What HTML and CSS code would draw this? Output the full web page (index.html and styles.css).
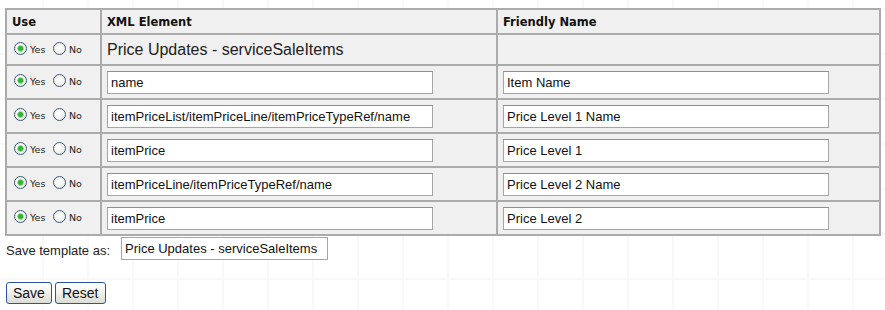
FILE: index.html
```html
<!DOCTYPE html>
<html lang="en">

<head>
    <meta charset="UTF-8">
    <meta name="viewport" content="width=device-width, initial-scale=1.0">
    <title>Template Mapping</title>
    <link rel="stylesheet" href="styles.css">
</head>

<body>
    <div class="page">
        <form class="mapping-form">
            <table class="mapping">
                <colgroup>
                    <col class="col-use">
                    <col class="col-xml">
                    <col class="col-name">
                </colgroup>
                <tr class="head">
                    <th>Use</th>
                    <th>XML Element</th>
                    <th>Friendly Name</th>
                </tr>
                <tr class="title-row">
                    <td class="use">
                        <label><input type="radio" name="use0" checked><span>Yes</span></label>
                        <label><input type="radio" name="use0"><span>No</span></label>
                    </td>
                    <td class="title">Price Updates - serviceSaleItems</td>
                    <td></td>
                </tr>
                <tr>
                    <td class="use">
                        <label><input type="radio" name="use1" checked><span>Yes</span></label>
                        <label><input type="radio" name="use1"><span>No</span></label>
                    </td>
                    <td><input type="text" class="field" value="name"></td>
                    <td><input type="text" class="field" value="Item Name"></td>
                </tr>
                <tr>
                    <td class="use">
                        <label><input type="radio" name="use2" checked><span>Yes</span></label>
                        <label><input type="radio" name="use2"><span>No</span></label>
                    </td>
                    <td><input type="text" class="field" value="itemPriceList/itemPriceLine/itemPriceTypeRef/name"></td>
                    <td><input type="text" class="field" value="Price Level 1 Name"></td>
                </tr>
                <tr>
                    <td class="use">
                        <label><input type="radio" name="use3" checked><span>Yes</span></label>
                        <label><input type="radio" name="use3"><span>No</span></label>
                    </td>
                    <td><input type="text" class="field" value="itemPrice"></td>
                    <td><input type="text" class="field" value="Price Level 1"></td>
                </tr>
                <tr>
                    <td class="use">
                        <label><input type="radio" name="use4" checked><span>Yes</span></label>
                        <label><input type="radio" name="use4"><span>No</span></label>
                    </td>
                    <td><input type="text" class="field" value="itemPriceLine/itemPriceTypeRef/name"></td>
                    <td><input type="text" class="field" value="Price Level 2 Name"></td>
                </tr>
                <tr>
                    <td class="use">
                        <label><input type="radio" name="use5" checked><span>Yes</span></label>
                        <label><input type="radio" name="use5"><span>No</span></label>
                    </td>
                    <td><input type="text" class="field" value="itemPrice"></td>
                    <td><input type="text" class="field" value="Price Level 2"></td>
                </tr>
            </table>

            <div class="save-row">
                <label for="TemplateName">Save template as:</label>
                <input type="text" id="TemplateName" class="template-name" value="Price Updates - serviceSaleItems">
            </div>

            <div class="actions">
                <button type="submit" class="btn">Save</button>
                <button type="reset" class="btn">Reset</button>
            </div>
        </form>
    </div>
</body>

</html>
```

FILE: styles.css
```css
/* Template mapping page */
body {
    margin: 0;
    padding: 0;
    font-family: "Liberation Sans", Arial, sans-serif;
    font-size: 13px;
    color: #000;
    background-color: #fff;
    background-image:
        linear-gradient(to right, #f8f8f8 2px, transparent 2px),
        linear-gradient(to bottom, #f8f8f8 2px, transparent 2px);
    background-size: 45px 45px;
    background-position: 42px 8px;
}

.page {
    padding: 8px 5px 0 5px;
}

.mapping {
    width: 876px;
    border-collapse: collapse;
    background-color: #f0f0f0;
    border: 2px solid #ababab;
}

.col-use {
    width: 95px;
}

.col-xml {
    width: 396px;
}

.mapping th,
.mapping td {
    border: 2px solid #ababab;
    padding: 0 0 0 5px;
    text-align: left;
    vertical-align: middle;
}

.mapping th {
    height: 23px;
    font-family: "DejaVu Sans", Tahoma, sans-serif;
    font-size: 11.5px;
    font-weight: bold;
    color: #111;
}

.mapping td {
    height: 32px;
}

.mapping .title-row td {
    height: 29px;
}

.mapping td.title {
    font-size: 16px;
    color: #222;
}

.mapping td.use {
    padding-left: 7px;
    white-space: nowrap;
}

.use label {
    display: inline-flex;
    align-items: center;
    margin-right: 4px;
    font-family: "DejaVu Sans", Tahoma, sans-serif;
    font-size: 9.5px;
    color: #222;
}

.use label span {
    padding-top: 2px;
}

input[type="radio"] {
    appearance: none;
    -webkit-appearance: none;
    width: 13px;
    height: 13px;
    margin: 0 3px 0 0;
    border: 1px solid #3c5a7c;
    border-radius: 50%;
    background: radial-gradient(circle at 40% 40%, #fff 0, #e6e6e0 100%);
    box-sizing: border-box;
}

input[type="radio"]:checked {
    background:
        radial-gradient(circle, #2fb52f 0, #2fb52f 2px, #8fd98f 3px, transparent 3.5px),
        radial-gradient(circle at 40% 40%, #fff 0, #e6e6e0 100%);
}

.field {
    width: 326px;
    height: 23px;
    margin: 0;
    padding: 1px 3px;
    border: 1px solid #a5a5a5;
    border-top-color: #8f8f8f;
    background-color: #fff;
    font-family: "Liberation Sans", Arial, sans-serif;
    font-size: 13px;
    color: #111;
    box-sizing: border-box;
}

.save-row {
    display: flex;
    align-items: center;
    margin-top: 1px;
    padding-left: 1px;
}

.save-row label {
    width: 115px;
    font-size: 13px;
    color: #222;
    padding-top: 3px;
}

.template-name {
    width: 207px;
    height: 23px;
    padding: 1px 3px;
    border: 1px solid #a5a5a5;
    background-color: #fff;
    font-family: "Liberation Sans", Arial, sans-serif;
    font-size: 13px;
    color: #111;
    box-sizing: border-box;
}

.actions {
    display: flex;
    gap: 3px;
    margin-top: 22px;
    padding-left: 1px;
}

.btn {
    height: 22px;
    padding: 0 6px;
    border: 1px solid #2b55a0;
    border-radius: 3px;
    background: linear-gradient(to bottom, #ffffff 0%, #f4f4f0 40%, #dcdcd6 100%);
    font-family: "Liberation Sans", Arial, sans-serif;
    font-size: 14px;
    color: #111;
    cursor: pointer;
}

.btn:hover {
    background: linear-gradient(to bottom, #ffffff 0%, #eef3fb 40%, #d4dcea 100%);
}
```
